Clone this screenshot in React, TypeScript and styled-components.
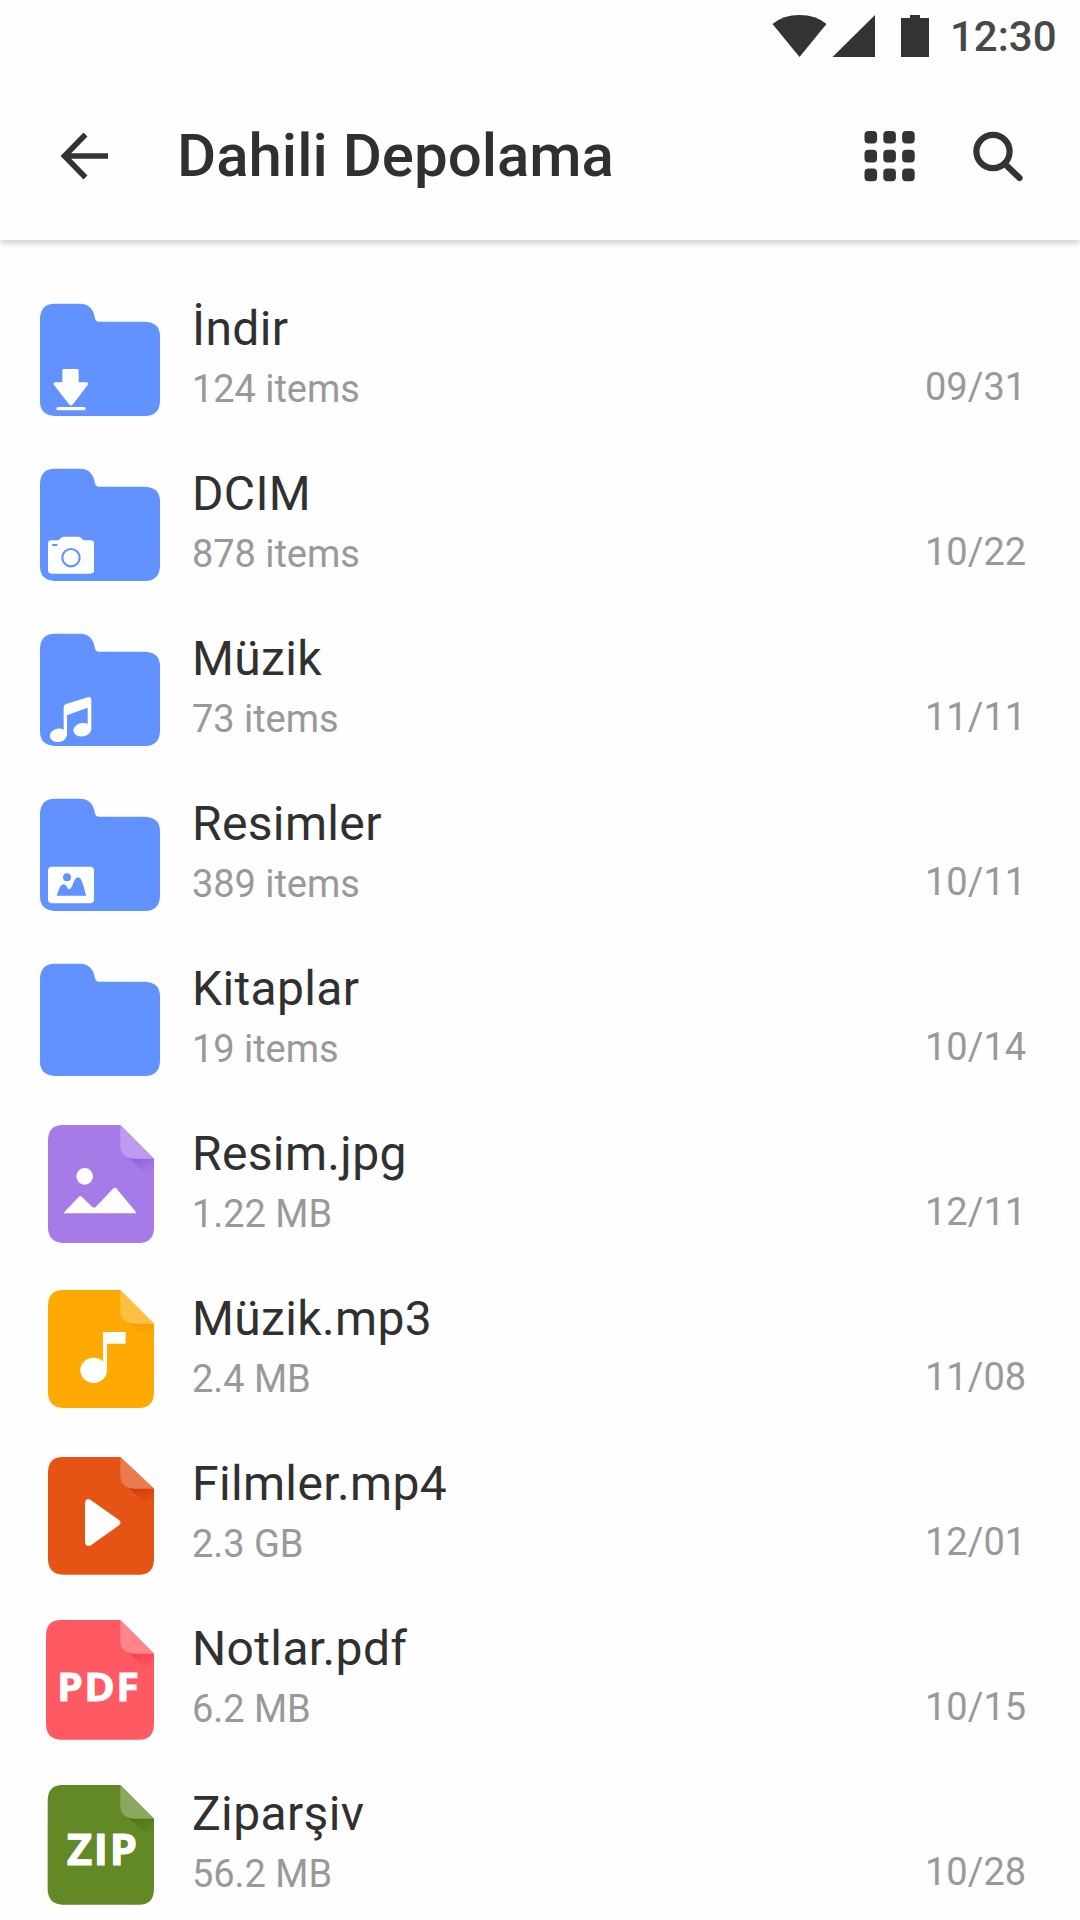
import React from "react";
import styled, { createGlobalStyle } from "styled-components";

const GlobalStyle = createGlobalStyle`
  html, body { margin: 0; padding: 0; background: #fefefe; }
  * { box-sizing: border-box; }
`;

const Screen = styled.main`
  width: 1080px;
  height: 1920px;
  overflow: hidden;
  display: flex;
  flex-direction: column;
  background: #fefefe;
  font-family: Roboto, "Noto Sans", sans-serif;
  color: #303030;
`;

const Top = styled.header`
  height: 240px;
  flex: none;
  display: flex;
  flex-direction: column;
  background: #fefefe;
  box-shadow: 0 3px 7px rgba(0, 0, 0, 0.2);
`;

const StatusBar = styled.div`
  height: 72px;
  display: flex;
  justify-content: flex-end;
  padding-right: 24px;
`;

const StatusIcons = styled.svg`
  width: 160px;
  height: 72px;
  fill: #333;
`;

const Clock = styled.time`
  width: 106px;
  margin-left: 20px;
  font-size: 42px;
  font-weight: 500;
  line-height: 74px;
  letter-spacing: 0;
  color: #484848;
  white-space: nowrap;
`;

const Toolbar = styled.div`
  height: 168px;
  display: flex;
  align-items: flex-start;
  padding: 48px 46px 0 54px;
`;

const IconButton = styled.button<{ $gap?: number }>`
  width: 72px;
  height: 72px;
  padding: 0;
  border: 0;
  background: none;
  margin-left: ${(p) => p.$gap ?? 0}px;
  svg { display: block; width: 72px; height: 72px; }
`;

const Title = styled.h1`
  flex: 1;
  margin: 0 0 0 51px;
  font-size: 60px;
  font-weight: 500;
  line-height: 71px;
  white-space: nowrap;
`;

const List = styled.ul`
  list-style: none;
  margin: 0;
  padding: 40px 0 0;
`;

const Row = styled.li`
  height: 165px;
  display: flex;
  padding-left: 20px;
`;

const Thumb = styled.svg`
  flex: none;
  width: 160px;
  height: 165px;
`;

const Details = styled.div`
  flex: 1;
  padding: 21px 0 0 12px;
`;

const Name = styled.div`
  font-size: 48px;
  line-height: 56px;
  height: 61px;
  letter-spacing: 0.35px;
  white-space: nowrap;
`;

const Meta = styled.div`
  font-size: 38px;
  line-height: 54px;
  letter-spacing: -0.05px;
  color: #999;
  white-space: nowrap;
`;

const DateText = styled(Meta)`
  width: 155px;
  padding-top: 80px;
  letter-spacing: 0;
`;

const Label = styled.text`
  font-family: "Open Sans", "Noto Sans", sans-serif;
  font-weight: 700;
  fill: #fff;
  stroke: #fff;
  stroke-width: 2.5px;
  letter-spacing: 4px;
`;

type Kind =
  | "download" | "camera" | "tunes" | "gallery" | "folder"
  | "image" | "audio" | "video" | "pdf" | "zip";

const FolderGlyph = ({ kind }: { kind: Kind }) => (
  <>
    <path
      fill="#6192ff"
      d="M104 71H180C207 71 221 89 224 111C226 121 229 125 237 125H376Q420 127 420 169V364Q418 408 376 408H104Q60 406 60 364V115Q62 71 104 71Z"
    />
    {kind === "download" && (
      <g fill="#fff">
        <path d="M131 267H172Q176 267 176 271V307H199Q207 308 203 315L159 373Q153 380 147 373L102 315Q98 308 106 307H127V271Q127 267 131 267Z" />
        <rect x="109" y="381" width="88" height="10" rx="5" />
      </g>
    )}
    {kind === "camera" && (
      <>
        <path fill="#fff" d="M94 286H112C120 286 122 275 132 275H175C185 275 186 286 194 286H212Q222 286 222 296V376Q222 386 212 386H94Q84 386 84 376V296Q84 286 94 286Z" />
        <circle cx="153" cy="338" r="26" fill="none" stroke="#6192ff" strokeWidth="6.5" />
        <rect x="96" y="297" width="17" height="6" rx="3" fill="#6192ff" />
      </>
    )}
    {kind === "tunes" && (
      <g fill="#fff">
        <ellipse cx="115" cy="376" rx="26" ry="20" transform="rotate(-10 115 376)" />
        <ellipse cx="187" cy="359" rx="27" ry="20" transform="rotate(-10 187 359)" />
        <path d="M131 292Q131 285 138 282L203 262Q214 258 214 269V359H203V293L141 316V376H131Z" />
      </g>
    )}
    {kind === "gallery" && (
      <>
        <rect x="84" y="275" width="138" height="110" rx="12" fill="#fff" />
        <g fill="#6192ff">
          <circle cx="141" cy="307" r="12" />
          <path d="M110 362C117 345 121 328 131 328C139 328 143 344 149 343C157 341 162 307 174 307C186 307 190 335 199 362Z" />
        </g>
      </>
    )}
  </>
);

type Sheet = { fill: string; fold: string; shade: string; x: number; top: number; bottom: number };

const sheets: Partial<Record<Kind, Sheet>> = {
  image: { fill: "#a67be8", fold: "#bf9bef", shade: "#9060dc", x: 84, top: 60, bottom: 414 },
  audio: { fill: "#ffaa02", fold: "#ffbf45", shade: "#f79a05", x: 84, top: 60, bottom: 414 },
  video: { fill: "#e55315", fold: "#eb7a50", shade: "#cb3d08", x: 84, top: 66, bottom: 419 },
  pdf: { fill: "#ff5964", fold: "#ff858c", shade: "#f0404d", x: 78, top: 60, bottom: 419 },
  zip: { fill: "#628926", fold: "#8aa95f", shade: "#4d7315", x: 83, top: 60, bottom: 419 },
};

const SheetGlyph = ({ kind, sheet }: { kind: Kind; sheet: Sheet }) => {
  const { fill, fold, shade, x, top, bottom } = sheet;
  const crease = 161;
  return (
    <>
      <defs>
        <linearGradient id={`shade-${kind}`} gradientUnits="userSpaceOnUse" x1="358" y1="150" x2="385" y2="205">
          <stop offset="0" stopColor={shade} />
          <stop offset="1" stopColor={fill} />
        </linearGradient>
      </defs>
      <path
        fill={fill}
        d={`M${x + 44} ${top}H301L402 ${crease}V${bottom - 44}Q400 ${bottom} 358 ${bottom}H${x + 44}Q${x + 2} ${bottom - 2} ${x} ${bottom - 44}V${top + 44}Q${x + 2} ${top} ${x + 44} ${top}Z`}
      />
      <path fill={`url(#shade-${kind})`} d={`M318 150L402 ${crease}V232Z`} />
      <path fill={fold} d={`M301 ${top}L402 ${crease}H339Q301 157 301 121Z`} />
      {kind === "image" && (
        <g fill="#fff">
          <circle cx="194" cy="214" r="25" />
          <path d="M134 320Q129 325 136 325H344Q351 325 346 319L290 251Q285 245 279 251L227 306Q222 311 217 306L186 276Q181 270 176 276Z" />
        </g>
      )}
      {kind === "audio" && (
        <g fill="#fff">
          <ellipse cx="221" cy="301" rx="40" ry="38" />
          <path d="M249 186H317V221H261V301H249Z" />
        </g>
      )}
      {kind === "video" && (
        <path fill="#fff" d="M195 204Q197 188 211 194L297 255Q306 263 297 271L213 331Q199 338 195 324Z" />
      )}
      {kind === "pdf" && (
        <Label x="111" y="302" fontSize="120" textLength="250" lengthAdjust="spacingAndGlyphs">PDF</Label>
      )}
      {kind === "zip" && (
        <Label x="140" y="301" fontSize="130" textLength="216" lengthAdjust="spacingAndGlyphs">ZIP</Label>
      )}
    </>
  );
};

const entries: { name: string; meta: string; date: string; kind: Kind }[] = [
  { name: "İndir", meta: "124 items", date: "09/31", kind: "download" },
  { name: "DCIM", meta: "878 items", date: "10/22", kind: "camera" },
  { name: "Müzik", meta: "73 items", date: "11/11", kind: "tunes" },
  { name: "Resimler", meta: "389 items", date: "10/11", kind: "gallery" },
  { name: "Kitaplar", meta: "19 items", date: "10/14", kind: "folder" },
  { name: "Resim.jpg", meta: "1.22 MB", date: "12/11", kind: "image" },
  { name: "Müzik.mp3", meta: "2.4 MB", date: "11/08", kind: "audio" },
  { name: "Filmler.mp4", meta: "2.3 GB", date: "12/01", kind: "video" },
  { name: "Notlar.pdf", meta: "6.2 MB", date: "10/15", kind: "pdf" },
  { name: "Ziparşiv", meta: "56.2 MB", date: "10/28", kind: "zip" },
];

const Entry = ({ name, meta, date, kind }: (typeof entries)[number]) => {
  const sheet = sheets[kind];
  return (
    <Row>
      <Thumb viewBox="0 0 480 495">
        {sheet ? <SheetGlyph kind={kind} sheet={sheet} /> : <FolderGlyph kind={kind} />}
      </Thumb>
      <Details>
        <Name>{name}</Name>
        <Meta>{meta}</Meta>
      </Details>
      <DateText>{date}</DateText>
    </Row>
  );
};

export default function App() {
  return (
    <Screen>
      <GlobalStyle />
      <Top>
        <StatusBar>
          <StatusIcons viewBox="0 0 160 72">
            <path d="M2.5 24Q13 15 29.5 15T56.5 24L29.5 57Z" />
            <path d="M62.5 57L105 15V57Z" />
            <path d="M131 18H140V15H150V18H159V57H131Z" />
          </StatusIcons>
          <Clock>12:30</Clock>
        </StatusBar>
        <Toolbar>
          <IconButton aria-label="Geri">
            <svg viewBox="0 0 72 72" fill="none" stroke="#333" strokeWidth="5.6">
              <path d="M31.5 14.5L10.5 36L31.5 57.5M10 36H54" />
            </svg>
          </IconButton>
          <Title>Dahili Depolama</Title>
          <IconButton aria-label="Izgara">
            <svg viewBox="0 0 72 72" fill="#333">
              {[0, 1, 2].flatMap((r) =>
                [0, 1, 2].map((c) => (
                  <rect key={`${r}${c}`} x={10.5 + c * 18.8} y={11 + r * 18.8} width="12.6" height="12.6" rx="4" />
                ))
              )}
            </svg>
          </IconButton>
          <IconButton aria-label="Ara" $gap={36}>
            <svg viewBox="0 0 72 72" fill="none" stroke="#333" strokeWidth="6.2" strokeLinecap="round">
              <circle cx="31" cy="31.5" r="16.6" />
              <path d="M43.5 44.5L57.5 58" />
            </svg>
          </IconButton>
        </Toolbar>
      </Top>
      <List>
        {entries.map((e) => (
          <Entry key={e.name} {...e} />
        ))}
      </List>
    </Screen>
  );
}
